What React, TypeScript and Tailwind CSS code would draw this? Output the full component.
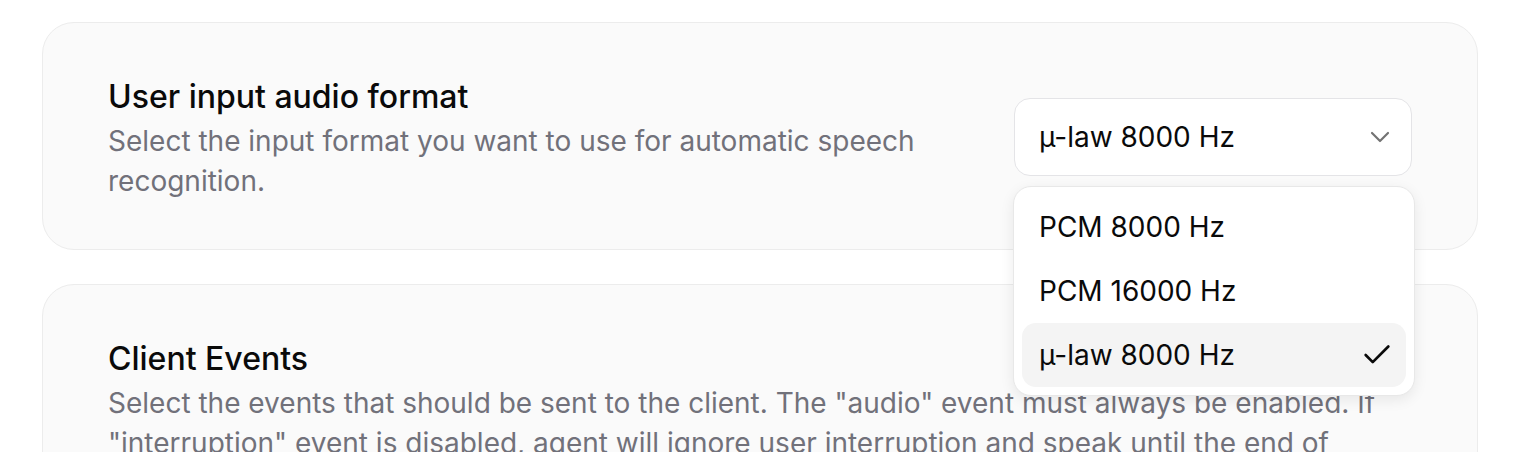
import { Check, ChevronDown } from 'lucide-react';

const options = ['PCM 8000 Hz', 'PCM 16000 Hz', 'µ-law 8000 Hz'];

export default function App() {
  const selected = 'µ-law 8000 Hz';

  return (
    <div
      className="h-[452px] overflow-hidden bg-white pl-[42px] pr-[46px] pt-[22px]"
      style={{ fontFamily: 'Inter, "Noto Sans", sans-serif' }}
    >
      <div className="flex flex-col gap-[34px]">
        <section className="flex items-center justify-between rounded-[32px] border border-[#ececec] bg-[#fafafa] px-[65px] pt-[50px] pb-[48px]">
          <div className="max-w-[860px]">
            <h2 className="text-[32px] leading-[48px] font-medium text-[#0a0a0a]">User input audio format</h2>
            <p className="text-[28px] leading-[40px] text-[#71717a]">
              Select the input format you want to use for automatic speech recognition.
            </p>
          </div>

          <div className="relative w-[398px]">
            <button className="flex h-[78px] w-full items-center justify-between rounded-[16px] border border-[#e4e4e7] bg-white pl-[24px] pr-[15px] text-[28px] text-[#0a0a0a]">
              <span>{selected}</span>
              <ChevronDown size={32} strokeWidth={1.6} className="text-[#737373]" />
            </button>

            <div className="absolute -left-px top-[88px] z-10 w-[402px] rounded-[18px] border border-[#e8e8e8] bg-white p-[8px] shadow-[0_4px_14px_rgba(0,0,0,0.08)]">
              {options.map((o) => (
                <div
                  key={o}
                  className={`flex h-[64px] items-center justify-between rounded-[14px] pl-[17px] pr-[12px] text-[28px] text-[#0a0a0a] ${
                    o === selected ? 'bg-[#f4f4f4]' : ''
                  }`}
                >
                  <span>{o}</span>
                  {o === selected && <Check size={34} strokeWidth={1.9} className="text-[#0a0a0a]" />}
                </div>
              ))}
            </div>
          </div>
        </section>

        <section className="rounded-[32px] border border-[#ececec] bg-[#fafafa] px-[65px] pt-[50px] pb-[47px]">
          <h2 className="text-[32px] leading-[48px] font-medium text-[#0a0a0a]">Client Events</h2>
          <p className="text-[28px] leading-[40px] text-[#71717a]">
            Select the events that should be sent to the client. The "audio" event must always be enabled. If
            "interruption" event is disabled, agent will ignore user interruption and speak until the end of
            response.
          </p>
        </section>
      </div>
    </div>
  );
}
